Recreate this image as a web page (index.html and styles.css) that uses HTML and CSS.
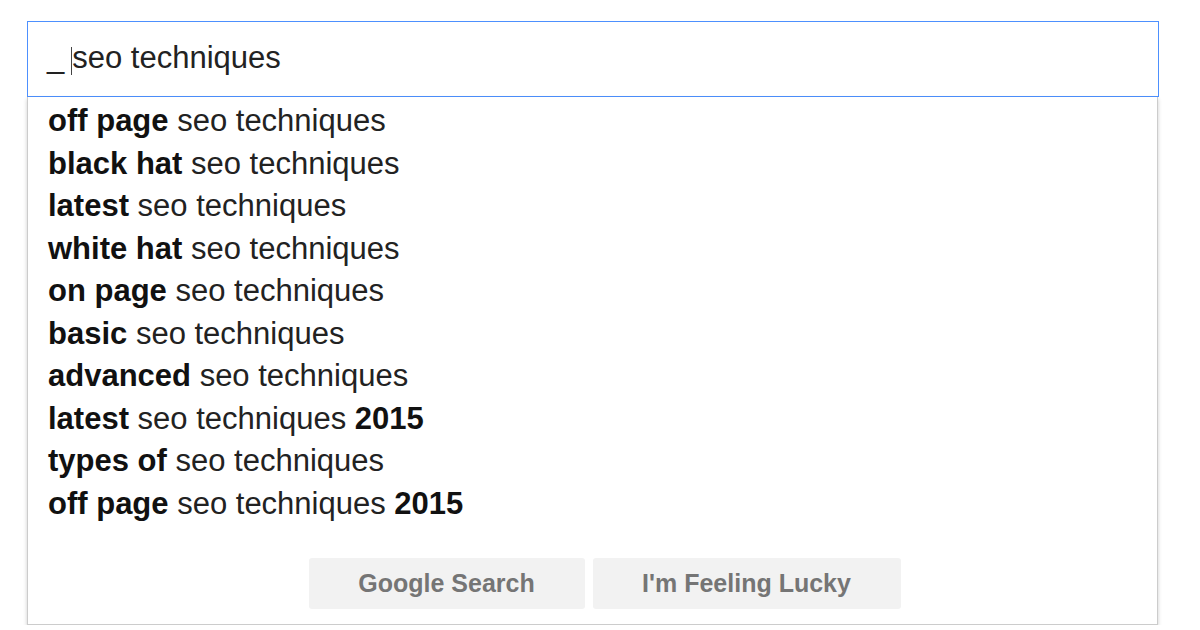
FILE: index.html
```html
<!DOCTYPE html>
<html lang="en">
<head>
  <meta charset="UTF-8" />
  <title>seo techniques</title>
  <link rel="stylesheet" href="styles.css">
</head>
<body>
  <div class="search">
    <div class="query">
      <span class="prefix">_</span><span class="caret"></span><span>seo techniques</span>
    </div>
    <div class="suggestions">
      <ul class="list">
        <li><b>off page</b> seo techniques</li>
        <li><b>black hat</b> seo techniques</li>
        <li><b>latest</b> seo techniques</li>
        <li><b>white hat</b> seo techniques</li>
        <li><b>on page</b> seo techniques</li>
        <li><b>basic</b> seo techniques</li>
        <li><b>advanced</b> seo techniques</li>
        <li><b>latest</b> seo techniques <b>2015</b></li>
        <li><b>types of</b> seo techniques</li>
        <li><b>off page</b> seo techniques <b>2015</b></li>
      </ul>
      <div class="buttons">
        <button class="btn btn-search">Google Search</button>
        <button class="btn btn-lucky">I'm Feeling Lucky</button>
      </div>
    </div>
  </div>
</body>
</html>
```

FILE: styles.css
```css
body {
  margin: 0;
  background: #fff;
  font-family: "Liberation Sans", Arial, sans-serif;
  color: #222;
}
.search {
  margin: 21px 0 0 27px;
  width: 1132px;
}
.query {
  box-sizing: border-box;
  height: 76px;
  border: 1px solid #4d90fe;
  padding: 0 0 2px 19px;
  display: flex;
  align-items: center;
  font-size: 31px;
  color: #222;
}
.prefix {
  margin-right: 7px;
}
.caret {
  display: inline-block;
  width: 1px;
  height: 28px;
  background: #444;
  margin-top: 6px;
}
.suggestions {
  box-sizing: border-box;
  width: 1131px;
  border: 1px solid #ccc;
  border-top: none;
  box-shadow: 0 2px 4px rgba(0,0,0,0.2);
  padding: 3px 0 15px;
}
.list {
  list-style: none;
  margin: 0;
  padding: 0 0 0 20px;
  font-size: 31px;
  line-height: 42.5px;
}
.list b {
  color: #111;
}
.buttons {
  display: flex;
  justify-content: center;
  gap: 8px;
  margin-top: 33px;
  padding-left: 24px;
}
.btn {
  height: 51px;
  border: none;
  border-radius: 3px;
  background: #f2f2f2;
  color: #757575;
  font-family: "Liberation Sans", Arial, sans-serif;
  font-size: 25px;
  font-weight: bold;
  padding: 0;
}
.btn-search {
  width: 276px;
}
.btn-lucky {
  width: 308px;
}
```
